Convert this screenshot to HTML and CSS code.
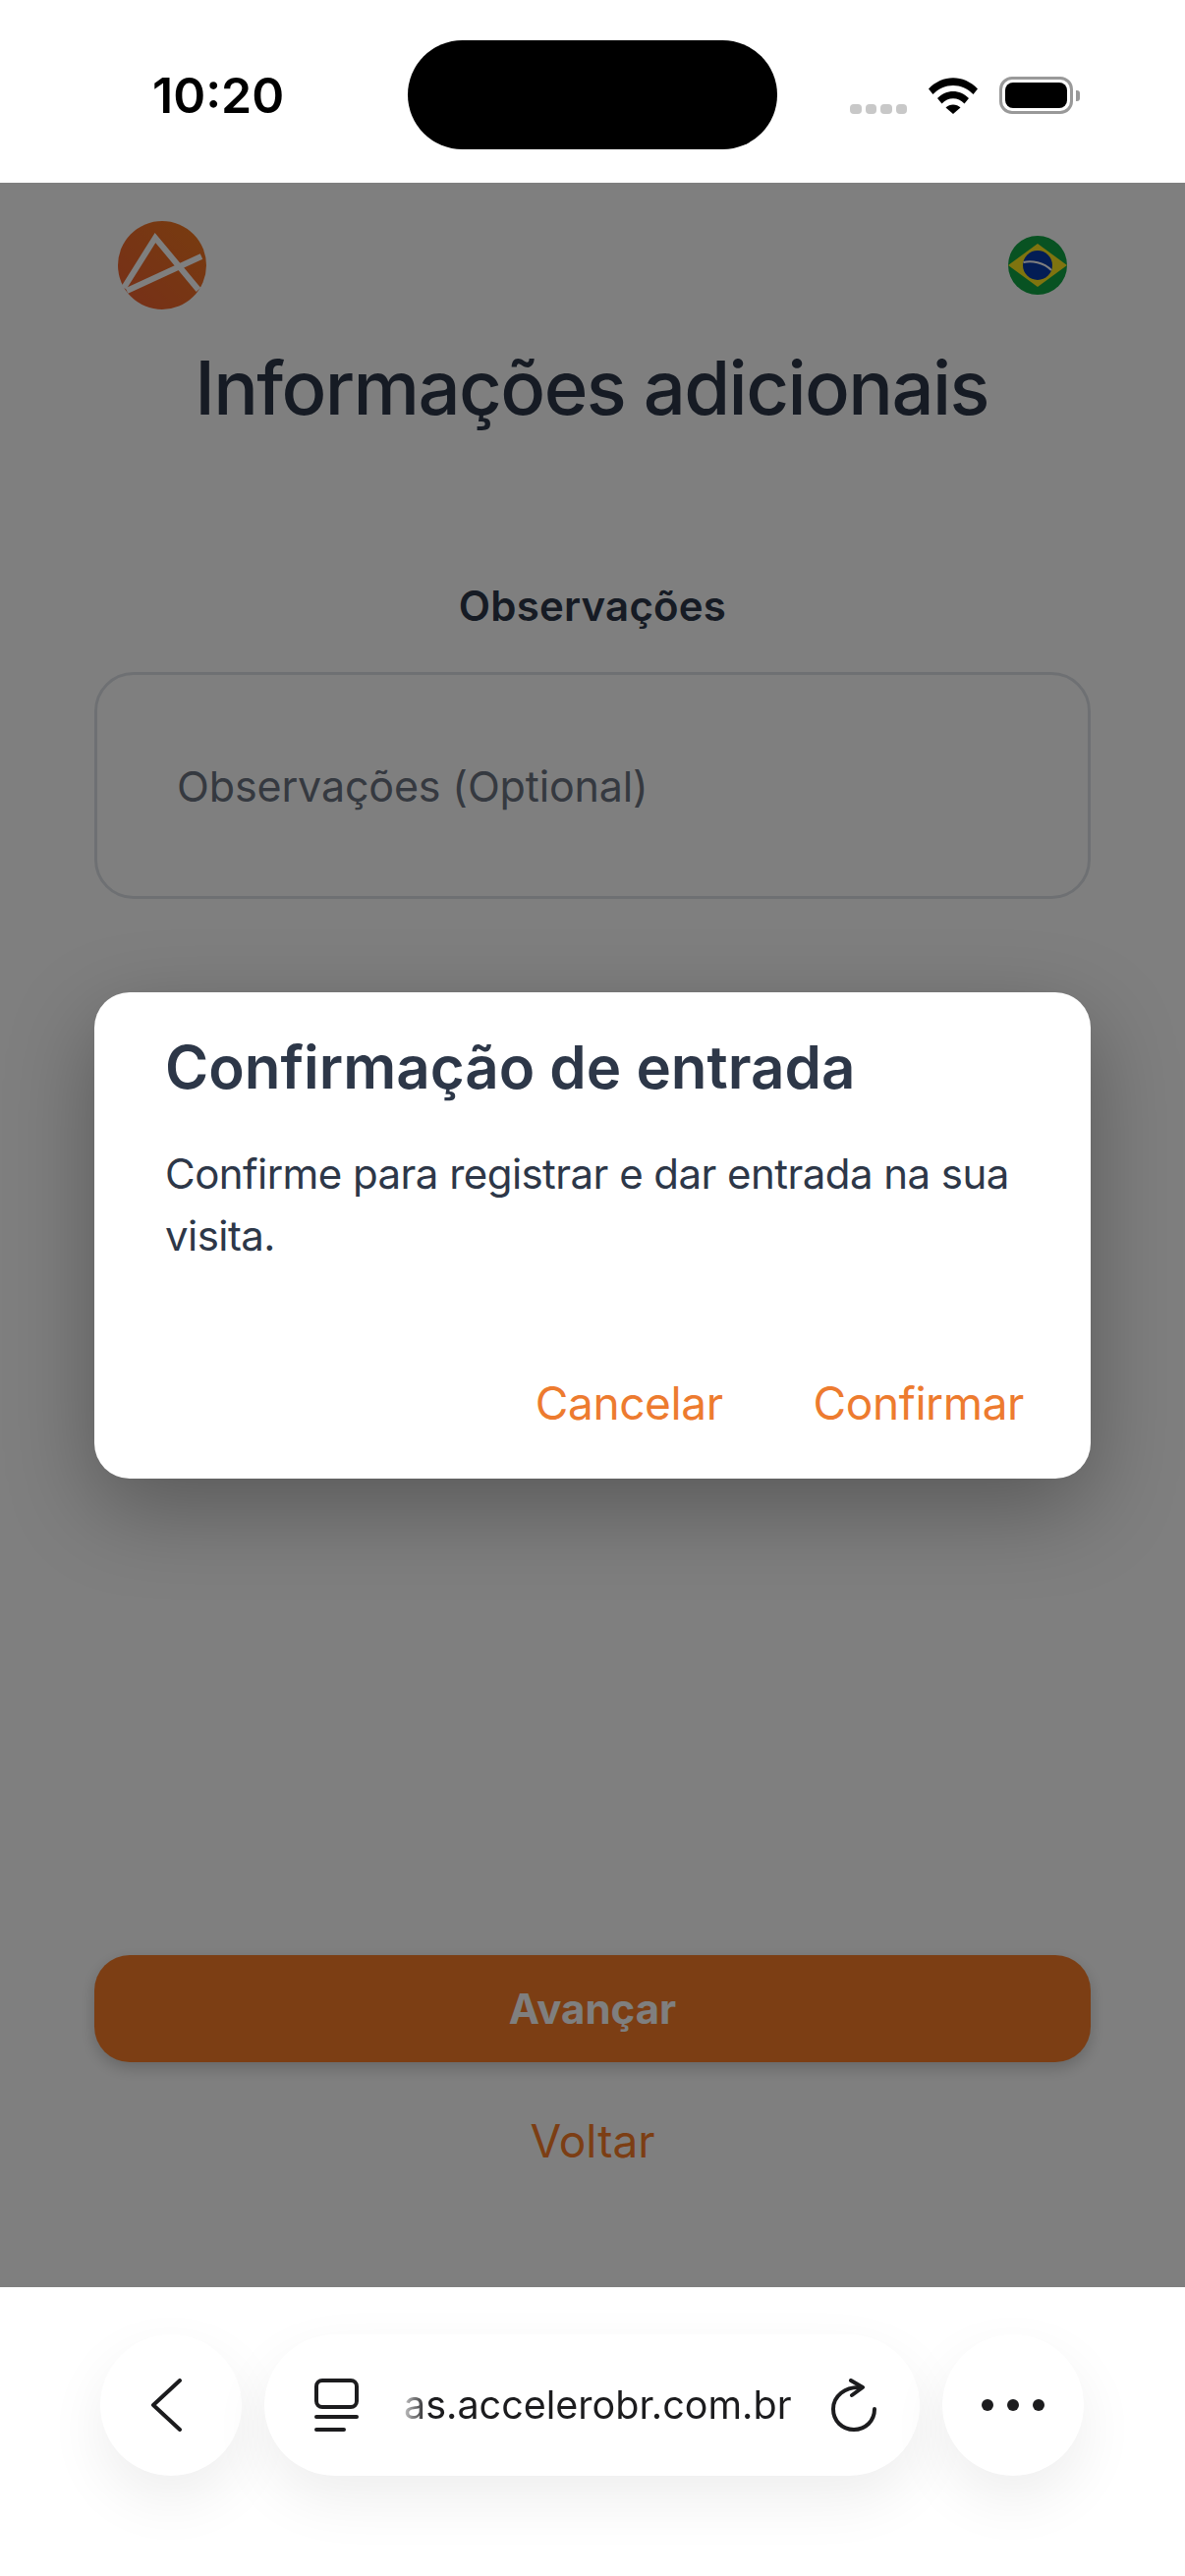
FILE: index.html
```html
<!DOCTYPE html>
<html lang="pt-BR">
<head>
  <meta charset="UTF-8">
  <title>Informações adicionais</title>
  <meta name="viewport" content="width=device-width, initial-scale=1.0">
  <link rel="stylesheet" href="styles.css">
</head>
<body>

  <div class="phone">

    <div class="status-bar">
      <span class="clock">10:20</span>
      <div class="island"></div>
      <div class="status-icons">
        <div class="signal"><i></i><i></i><i></i><i></i></div>
        <svg class="wifi" width="50" height="37" viewBox="0 0 50 37">
          <path d="M0 11.5C14 -3.5 36 -3.5 50 11.5L45.5 17C34 5 16 5 4.500 17Z" fill="#000"/>
          <path d="M9 21C18 11.500 32 11.500 41 21L36.500 26.500C30 19.500 20 19.500 13.500 26.500Z" fill="#000"/>
          <path d="M17.500 30.500C21.500 26.500 28.500 26.500 32.500 30.500L25 37Z" fill="#000"/>
        </svg>
        <div class="battery"><div class="battery-fill"></div></div>
        <div class="battery-cap"></div>
      </div>
    </div>

    <div class="page">
      <div class="top-row">
        <svg class="logo" width="90" height="90" viewBox="0 0 90 90">
          <defs>
            <linearGradient id="logoFill" x1="0" y1="1" x2="1" y2="0">
              <stop offset="0" stop-color="#ee5f32"/>
              <stop offset="1" stop-color="#f0781e"/>
            </linearGradient>
          </defs>
          <circle cx="45" cy="45" r="45" fill="url(#logoFill)"/>
          <path d="M6 68L38 17L82 70" fill="none" stroke="#fff" stroke-width="6"/>
          <path d="M9 71L85 36" fill="none" stroke="#fff" stroke-width="6"/>
        </svg>
        <svg class="flag" width="60" height="60" viewBox="0 0 60 60">
          <circle cx="30" cy="30" r="30" fill="#10a545"/>
          <path d="M0 30L30 8L60 30L30 52Z" fill="#ffe81f"/>
          <circle cx="30" cy="30" r="15" fill="#063aaa"/>
          <path d="M15.500 27C24 25 36 27 44 35" fill="none" stroke="#fff" stroke-width="2"/>
        </svg>
      </div>

      <h1 class="page-title">Informações adicionais</h1>

      <label class="field-label" for="obs">Observações</label>
      <div class="field">
        <span class="placeholder">Observações (Optional)</span>
      </div>

      <div class="actions">
        <button class="next-btn">Avançar</button>
        <a class="back-link">Voltar</a>
      </div>

      <div class="overlay">
        <div class="dialog">
          <h2 class="dialog-title">Confirmação de entrada</h2>
          <p class="dialog-text">Confirme para registrar e dar entrada na sua visita.</p>
          <div class="dialog-actions">
            <a class="dialog-btn">Cancelar</a>
            <a class="dialog-btn">Confirmar</a>
          </div>
        </div>
      </div>
    </div>

    <div class="toolbar">
      <div class="round-btn">
        <svg class="back-icon" width="32" height="54" viewBox="0 0 32 54">
          <path d="M30 2L3 27L30 52" fill="none" stroke="#1c1c1e" stroke-width="4" stroke-linecap="round" stroke-linejoin="round"/>
        </svg>
      </div>
      <div class="url-bar">
        <svg class="tabs-icon" width="45" height="54" viewBox="0 0 45 54">
          <rect x="2" y="2" width="41" height="27" rx="6" fill="none" stroke="#1c1c1e" stroke-width="4"/>
          <path d="M2 39H43" stroke="#1c1c1e" stroke-width="4" stroke-linecap="round"/>
          <path d="M2 52H30" stroke="#1c1c1e" stroke-width="4" stroke-linecap="round"/>
        </svg>
        <span class="url-text">as.accelerobr.com.br</span>
        <svg class="reload-icon" width="46" height="54" viewBox="0 0 46 54">
          <path d="M30 9C14 8 2 18 2 31C2 43 11 52 23 52C35 52 44 43 44 31" fill="none" stroke="#1c1c1e" stroke-width="4" stroke-linecap="round"/>
          <path d="M20 2L32 9L21 17" fill="none" stroke="#1c1c1e" stroke-width="4" stroke-linecap="round" stroke-linejoin="round"/>
        </svg>
      </div>
      <div class="round-btn">
        <div class="dots"><i></i><i></i><i></i></div>
      </div>
    </div>

  </div>

</body>
</html>
```

FILE: styles.css
```css
* {
  box-sizing: border-box;
}

body {
  margin: 0;
  background-color: #fff;
  font-family: Inter, 'Noto Sans', sans-serif;
}

.phone {
  width: 1206px;
  height: 2622px;
  display: flex;
  flex-direction: column;
  overflow: hidden;
}

/* status bar */
.status-bar {
  height: 186px;
  flex-shrink: 0;
  background-color: #fff;
  display: flex;
  align-items: flex-start;
  position: relative;
  z-index: 2;
}

.clock {
  width: 415px;
  padding: 67px 0 0 155px;
  font-size: 50px;
  line-height: 60px;
  font-weight: 600;
  color: #000;
}

.island {
  width: 376px;
  height: 111px;
  margin-top: 41px;
  background-color: #000;
  border-radius: 56px;
}

.status-icons {
  display: flex;
  align-items: flex-start;
  margin: 78px 0 0 74px;
}

.signal {
  display: flex;
  gap: 4px;
  margin: 28px 22px 0 0;
}

.signal i {
  width: 11.5px;
  height: 10px;
  border-radius: 4px;
  background-color: #c8c8c8;
}

.wifi {
  margin: 1px 22px 0 0;
}

.battery {
  width: 75px;
  height: 38px;
  border: 3px solid #999;
  border-radius: 13px;
  padding: 3px;
}

.battery-fill {
  height: 100%;
  background-color: #000;
  border-radius: 8px;
}

.battery-cap {
  width: 4px;
  height: 11px;
  margin: 14px 0 0 3px;
  background-color: #999;
  border-radius: 0 3px 3px 0;
}

/* page under the dialog */
.page {
  flex: 1;
  position: relative;
  background-color: #fff;
  display: flex;
  flex-direction: column;
  padding: 0 96px;
}

.top-row {
  display: flex;
  justify-content: space-between;
  align-items: center;
  height: 90px;
  margin: 39px 0 0 24px;
  padding-right: 24px;
}

.page-title {
  margin: 34px 0 0;
  padding-right: 2px;
  text-align: center;
  font-size: 76px;
  line-height: 90px;
  font-weight: 500;
  letter-spacing: -1.6px;
  color: #2d3748;
}

.field-label {
  display: block;
  margin-top: 153px;
  text-align: center;
  font-size: 42px;
  line-height: 50px;
  font-weight: 600;
  letter-spacing: 0.2px;
  color: #2d3748;
}

.field {
  height: 231px;
  margin-top: 42px;
  padding: 0 81px;
  display: flex;
  align-items: center;
  border: 3px solid #dde1e6;
  border-radius: 40px;
}

.placeholder {
  font-size: 43px;
  letter-spacing: -0.15px;
  color: #6b7280;
}

.actions {
  margin-top: auto;
  padding-bottom: 121px;
  display: flex;
  flex-direction: column;
  align-items: center;
}

.next-btn {
  width: 100%;
  height: 109px;
  border: none;
  border-radius: 36px;
  background-color: #f97d28;
  color: #fff;
  font-family: inherit;
  font-size: 42px;
  font-weight: 700;
  box-shadow: 0 6px 16px rgba(0, 0, 0, 0.2);
}

.back-link {
  margin-top: 52px;
  font-size: 46px;
  line-height: 56px;
  color: #f97d28;
}

.overlay {
  position: absolute;
  inset: 0;
  padding: 0 96px;
  display: flex;
  align-items: center;
  background-color: rgba(0, 0, 0, 0.5);
}

.dialog {
  width: 100%;
  height: 495px;
  padding: 40px 68px 0 72px;
  display: flex;
  flex-direction: column;
  background-color: #fff;
  border-radius: 36px;
  box-shadow: 0 30px 90px rgba(0, 0, 0, 0.3);
}

.dialog-title {
  margin: 0;
  font-size: 60px;
  line-height: 72px;
  font-weight: 600;
  color: #2d3748;
}

.dialog-text {
  margin: 41px 0 0;
  font-size: 42px;
  line-height: 63px;
  letter-spacing: -0.55px;
  color: #2d3748;
}

.dialog-actions {
  margin-top: auto;
  padding-bottom: 49px;
  display: flex;
  justify-content: flex-end;
  gap: 92px;
}

.dialog-btn {
  font-size: 46px;
  line-height: 56px;
  letter-spacing: -0.4px;
  color: #ed7b2f;
}

/* browser toolbar */
.toolbar {
  height: 294px;
  flex-shrink: 0;
  padding: 48px 0 0 102px;
  display: flex;
  gap: 23px;
  background-color: #fff;
  position: relative;
  z-index: 2;
}

.round-btn {
  width: 144px;
  height: 144px;
  border-radius: 50%;
  display: flex;
  align-items: center;
  justify-content: center;
  background-color: #fff;
  box-shadow: 0 24px 60px rgba(0, 0, 0, 0.07);
}

.back-icon {
  margin-right: 10px;
}

.url-bar {
  width: 667px;
  height: 144px;
  border-radius: 72px;
  padding: 0 44px 0 51px;
  display: flex;
  align-items: center;
  background-color: #fff;
  box-shadow: 0 24px 60px rgba(0, 0, 0, 0.07);
}

.url-text {
  margin-left: 46px;
  flex: 1;
  font-size: 39.5px;
  color: #1c1c1e;
  white-space: nowrap;
  -webkit-mask-image: linear-gradient(to right, rgba(0, 0, 0, 0.25), #000 24px);
  mask-image: linear-gradient(to right, rgba(0, 0, 0, 0.25), #000 24px);
}

.dots {
  display: flex;
  gap: 14px;
}

.dots i {
  width: 12px;
  height: 12px;
  border-radius: 50%;
  background-color: #1c1c1e;
}
```
